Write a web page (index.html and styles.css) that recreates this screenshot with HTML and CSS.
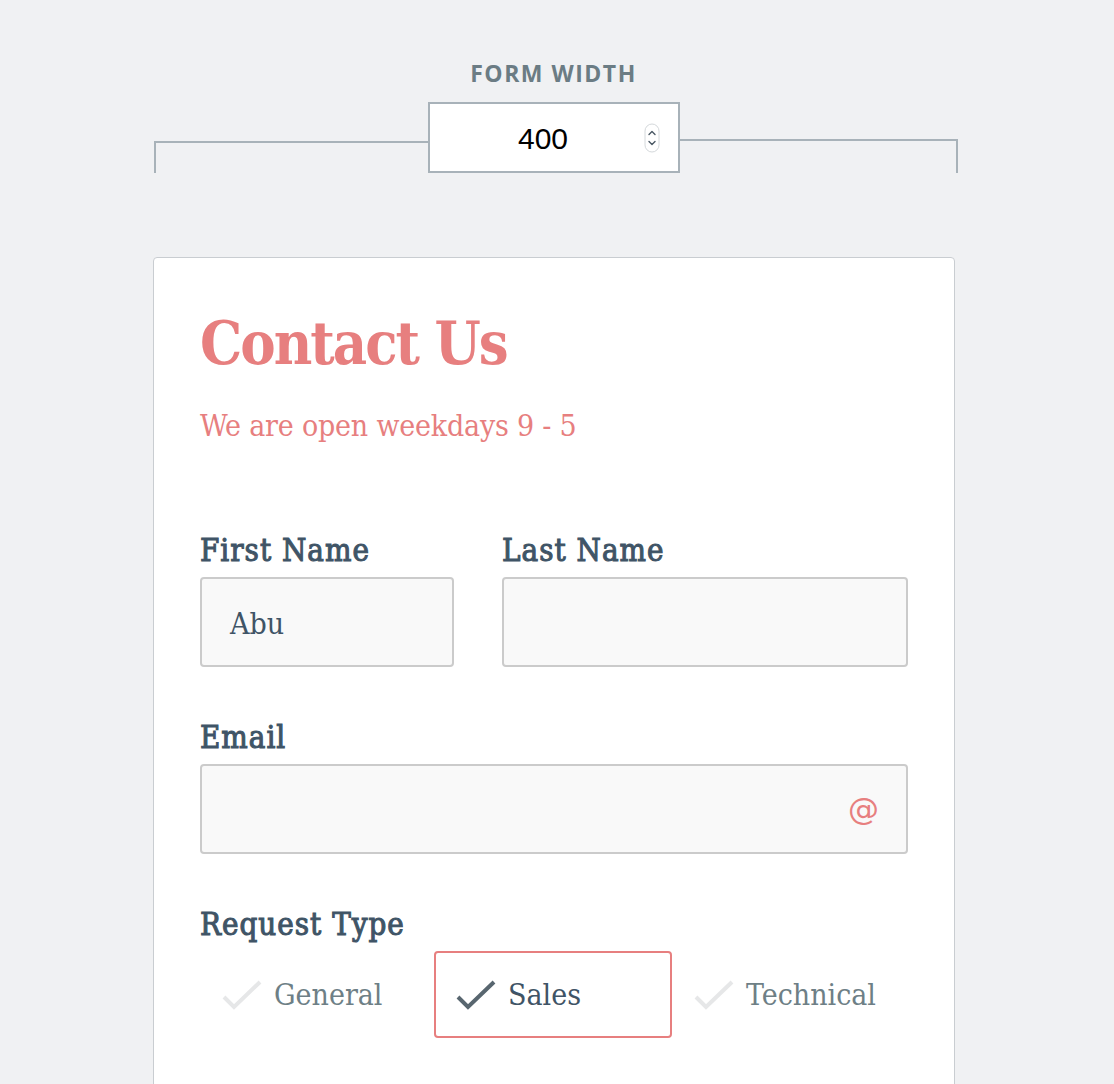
FILE: index.html
```html
<!DOCTYPE html>
<html lang="en">
<head>
<meta charset="utf-8">
<title>Contact Us</title>
<link rel="stylesheet" href="styles.css">
</head>
<body>
<div class="stage">
  <div class="width-control">
    <div class="width-label">FORM WIDTH</div>
    <div class="ruler">
      <div class="ruler-arm ruler-left"></div>
      <div class="number-box">
        <span class="number-value">400</span>
        <svg class="spinner" width="16" height="30" viewBox="0 0 16 30" aria-hidden="true">
          <rect x="1" y="1" width="14" height="28" rx="7" fill="#fff" stroke="#d4d8db" stroke-width="1"/>
          <path d="M5 11.5 L8 8.5 L11 11.5" fill="none" stroke="#4a5864" stroke-width="1.4" stroke-linecap="round" stroke-linejoin="round"/>
          <path d="M5 18.5 L8 21.5 L11 18.5" fill="none" stroke="#4a5864" stroke-width="1.4" stroke-linecap="round" stroke-linejoin="round"/>
        </svg>
      </div>
      <div class="ruler-arm ruler-right"></div>
    </div>
  </div>

  <div class="card">
    <h1 class="title">Contact Us</h1>
    <p class="subtitle">We are open weekdays 9 - 5</p>

    <div class="row two">
      <div class="field">
        <label class="label">First Name</label>
        <div class="input"><span class="input-text">Abu</span></div>
      </div>
      <div class="field">
        <label class="label">Last Name</label>
        <div class="input"></div>
      </div>
    </div>

    <div class="row">
      <div class="field">
        <label class="label">Email</label>
        <div class="input input-email"><span class="at">@</span></div>
      </div>
    </div>

    <div class="row">
      <div class="field">
        <label class="label">Request Type</label>
        <div class="options">
          <div class="option">
            <svg class="check" width="40" height="30" viewBox="0 0 40 30" aria-hidden="true"><path d="M2 17 L12 27 L38 2" fill="none" stroke="currentColor" stroke-width="4"/></svg>
            <span class="option-text">General</span>
          </div>
          <div class="option selected">
            <svg class="check" width="40" height="30" viewBox="0 0 40 30" aria-hidden="true"><path d="M2 17 L12 27 L38 2" fill="none" stroke="currentColor" stroke-width="4"/></svg>
            <span class="option-text">Sales</span>
          </div>
          <div class="option">
            <svg class="check" width="40" height="30" viewBox="0 0 40 30" aria-hidden="true"><path d="M2 17 L12 27 L38 2" fill="none" stroke="currentColor" stroke-width="4"/></svg>
            <span class="option-text">Technical</span>
          </div>
        </div>
      </div>
    </div>
  </div>
</div>
</body>
</html>
```

FILE: styles.css
```css
html, body {
  margin: 0;
  padding: 0;
  background: #f0f1f3;
}

.stage {
  width: 805px;
  margin-left: 153px;
  padding-top: 57px;
}

.width-control {
  display: flex;
  flex-direction: column;
  align-items: center;
}

.width-label {
  font-family: "Open Sans", "Liberation Sans", sans-serif;
  font-weight: 700;
  font-size: 23px;
  line-height: 32px;
  letter-spacing: 1.5px;
  color: #6b7c84;
  margin-left: -4px;
}

.ruler {
  align-self: stretch;
  display: flex;
  height: 71px;
  margin-top: 13px;
  margin-left: 1px;
}

.ruler-arm {
  align-self: flex-end;
  height: 32px;
  border-top: 2px solid #a8b2b9;
}

.ruler-left {
  flex: 0 0 274px;
  box-sizing: border-box;
  border-left: 2px solid #a8b2b9;
}

.ruler-right {
  flex: 1;
  border-right: 2px solid #a8b2b9;
}

.number-box {
  width: 248px;
  height: 67px;
  border: 2px solid #a8b2b9;
  background: #fff;
  display: flex;
  align-items: center;
}

.number-value {
  flex: 1;
  text-align: center;
  font-family: "Liberation Sans", Arial, sans-serif;
  font-size: 30px;
  color: #000;
  padding-left: 12px;
  padding-top: 2px;
}

.spinner {
  margin-right: 18px;
  margin-top: 1px;
}

.card {
  margin-top: 84px;
  width: 708px;
  padding: 51px 46px 120px;
  background: #fff;
  border: 1px solid #c9cdd1;
  border-radius: 4px;
}

.title {
  margin: 0;
  font-family: "DejaVu Serif", serif;
  font-stretch: condensed;
  font-weight: 700;
  font-size: 59px;
  line-height: 70px;
  letter-spacing: -2px;
  color: #e77f7f;
}

.subtitle {
  margin: 29px 0 0;
  font-family: "DejaVu Serif", serif;
  font-stretch: condensed;
  font-size: 30px;
  line-height: 36px;
  letter-spacing: -0.2px;
  color: #e77f7f;
}

.row {
  margin-top: 52px;
}

.row.two {
  margin-top: 88px;
  display: grid;
  grid-template-columns: 254px 1fr;
  column-gap: 48px;
}

.label {
  display: block;
  font-family: "DejaVu Serif", serif;
  font-stretch: condensed;
  font-weight: 400;
  font-size: 31px;
  line-height: 36px;
  letter-spacing: 1px;
  -webkit-text-stroke: 1px #3f5466;
  color: #3f5466;
  margin-bottom: 9px;
}

.input {
  height: 86px;
  border: 2px solid #cbcbcb;
  border-radius: 4px;
  background: #f9f9f9;
  display: flex;
  align-items: center;
  padding: 0 28px;
}

.input-text {
  font-family: "DejaVu Serif", serif;
  font-stretch: condensed;
  font-size: 30px;
  color: #3f5466;
  padding-top: 2px;
}

.input-email {
  justify-content: flex-end;
}

.at {
  font-family: "DejaVu Sans", sans-serif;
  font-size: 31px;
  color: #e77f7f;
  margin-right: -1px;
}

.options {
  display: grid;
  grid-template-columns: 234px 238px 1fr;
}

.option {
  height: 83px;
  border: 2px solid transparent;
  border-radius: 4px;
  display: flex;
  align-items: center;
  padding-left: 20px;
  color: #e6e7e8;
}

.option.selected {
  border-color: #e77f7f;
  color: #58666f;
}

.check {
  flex: none;
}

.option-text {
  margin-left: 12px;
  font-family: "DejaVu Serif", serif;
  font-stretch: condensed;
  font-size: 30px;
  color: #6e7f86;
}

.option.selected .option-text {
  color: #3f5466;
}
```
